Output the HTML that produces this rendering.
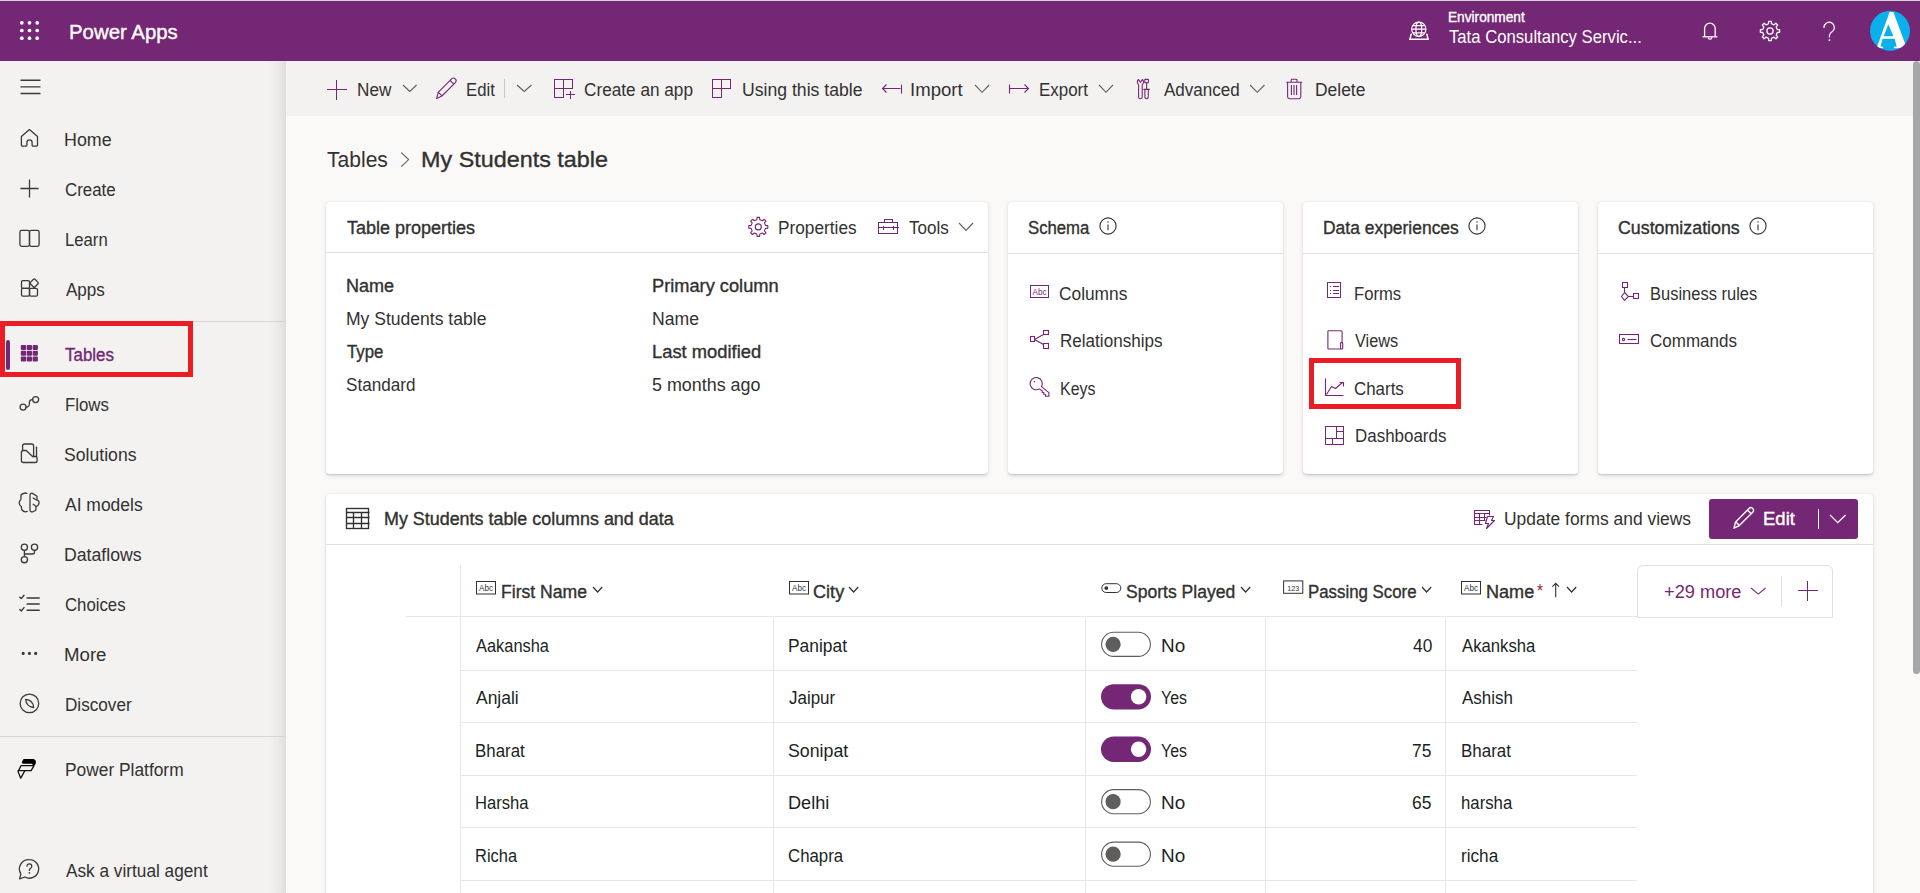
<!DOCTYPE html>
<html><head><meta charset="utf-8"><title>Power Apps | Tables</title>
<style>
html,body{margin:0;padding:0;width:1920px;height:893px;overflow:hidden;background:#faf9f8}
body{position:relative;font-family:"Liberation Sans",sans-serif}
.t{position:absolute;white-space:nowrap;line-height:1;transform-origin:0 0}
svg{display:block;overflow:visible}
</style></head><body>
<div style="position:absolute;left:0px;top:0px;width:1920px;height:1px;background:#d4d4d4"></div>
<div style="position:absolute;left:0px;top:1px;width:1920px;height:60px;background:#742774"></div>
<svg style="position:absolute;left:18px;top:19px" width="24" height="24" viewBox="18 19 24 24" fill="none"><g ><circle cx="21.80" cy="22.80" r="1.85" fill="#fff"/><circle cx="21.80" cy="30.50" r="1.85" fill="#fff"/><circle cx="21.80" cy="38.20" r="1.85" fill="#fff"/><circle cx="29.50" cy="22.80" r="1.85" fill="#fff"/><circle cx="29.50" cy="30.50" r="1.85" fill="#fff"/><circle cx="29.50" cy="38.20" r="1.85" fill="#fff"/><circle cx="37.20" cy="22.80" r="1.85" fill="#fff"/><circle cx="37.20" cy="30.50" r="1.85" fill="#fff"/><circle cx="37.20" cy="38.20" r="1.85" fill="#fff"/></g></svg>
<div class="t" style="left:69.48px;top:22.20px;font-size:20px;font-weight:400;-webkit-text-stroke:0.36px #fff;color:#fff;transform:scaleX(1.0190);">Power Apps</div>
<svg style="position:absolute;left:1404px;top:16px" width="30" height="30" viewBox="1404 16 30 30" fill="none"><g stroke="#fff" stroke-width="1.2"><circle cx="1418.8" cy="29.2" r="7.1"/><ellipse cx="1418.8" cy="29.2" rx="2.9" ry="7.1"/><path d="M1411.7 29.2 H1425.9 M1412.8 25.6 H1424.8 M1412.8 32.8 H1424.8"/><path d="M1411.3 33.6 L1409.9 39.2 H1428.1 L1426.7 33.6" stroke-width="1.5"/></g></svg>
<div class="t" style="left:1448.41px;top:10.90px;font-size:13.8px;font-weight:400;-webkit-text-stroke:0.36px #fff;color:#fff;transform:scaleX(0.9909);">Environment</div>
<div class="t" style="left:1449.40px;top:29.00px;font-size:17.5px;font-weight:400;color:#fff;transform:scaleX(0.9532);">Tata Consultancy Servic...</div>
<svg style="position:absolute;left:1698px;top:18px" width="24" height="26" viewBox="1698 18 24 26" fill="none"><g stroke="#fff" stroke-width="1.3" stroke-linejoin="round"><path d="M1704.6 36.6 V28.5 a5.3 5.3 0 0 1 10.6 0 V36.6"/><path d="M1702.5 36.8 H1717.4"/><path d="M1708.2 37.4 a1.8 1.8 0 0 0 3.6 0"/></g></svg>
<svg style="position:absolute;left:1757px;top:18px" width="26" height="26" viewBox="1757 18 26 26" fill="none"><g stroke="#fff" stroke-width="1.3" stroke-linejoin="round"><polygon points="1768.49,23.76 1768.72,21.38 1771.28,21.38 1771.51,23.76 1774.05,24.81 1775.90,23.30 1777.70,25.10 1776.19,26.95 1777.24,29.49 1779.62,29.72 1779.62,32.28 1777.24,32.51 1776.19,35.05 1777.70,36.90 1775.90,38.70 1774.05,37.19 1771.51,38.24 1771.28,40.62 1768.72,40.62 1768.49,38.24 1765.95,37.19 1764.10,38.70 1762.30,36.90 1763.81,35.05 1762.76,32.51 1760.38,32.28 1760.38,29.72 1762.76,29.49 1763.81,26.95 1762.30,25.10 1764.10,23.30 1765.95,24.81"/><circle cx="1770" cy="31" r="3.1"/></g></svg>
<svg style="position:absolute;left:1818px;top:18px" width="22" height="26" viewBox="1818 18 22 26" fill="none"><g stroke="#fff" stroke-width="1.3"><path d="M1824 27.4 a5.2 5.2 0 1 1 8.0 4.4 c-1.8 1.1 -2.6 2.2 -2.6 4.1 v1.0" stroke-linecap="round"/><circle cx="1829.4" cy="40.1" r="0.95" fill="#fff" stroke="none"/></g></svg>
<svg style="position:absolute;left:1866px;top:7px" width="48" height="48" viewBox="1866 7 48 48"><defs><clipPath id="av"><circle cx="1890" cy="30.8" r="20"/></clipPath></defs><circle cx="1890" cy="30.8" r="20" fill="#0aafec"/><g clip-path="url(#av)" fill="#fff"><path fill-rule="evenodd" d="M1889.6 12 H1893.4 L1906.5 47.5 H1897 L1894.6 38.8 H1882.6 L1880.2 47.5 H1876.8 Z M1888.3 24.2 L1893.4 36.3 H1883.6 Z"/><rect x="1874" y="46.6" width="9" height="1.6"/><rect x="1894" y="46.6" width="14" height="1.6"/></g></svg>
<div style="position:absolute;left:0px;top:61px;width:286px;height:832px;background:#f3f2f1"></div>
<div style="position:absolute;left:268px;top:61px;width:18px;height:832px;background:linear-gradient(to right, rgba(0,0,0,0) 0%, rgba(0,0,0,0.03) 55%, rgba(0,0,0,0.085) 100%)"></div>
<svg style="position:absolute;left:18px;top:76px" width="26" height="22" viewBox="18 76 26 22" fill="none"><g stroke="#3b3a39" stroke-width="1.4"><path d="M20.5 80.3 H40.5 M20.5 86.9 H40.5 M20.5 93.5 H40.5"/></g></svg>
<svg style="position:absolute;left:15px;top:125.5px" width="30" height="30" viewBox="15 125.5 30 30" fill="none"><g stroke="#3b3a39" stroke-width="1.3" stroke-linejoin="round" stroke-linecap="round"><path d="M21.40 136.10 L29.45 129.10 L37.50 136.10 V144.40 a1.2 1.2 0 0 1 -1.2 1.2 H33.30 a1.2 1.2 0 0 1 -1.2 -1.2 V141.90 a2.6 2.6 0 0 0 -5.2 0 V144.40 a1.2 1.2 0 0 1 -1.2 1.2 H22.60 a1.2 1.2 0 0 1 -1.2 -1.2 Z"/></g></svg>
<div class="t" style="left:64.48px;top:131.90px;font-size:17.5px;font-weight:400;color:#323130;transform:scaleX(1.0200);">Home</div>
<svg style="position:absolute;left:15px;top:175.5px" width="30" height="30" viewBox="15 175.5 30 30" fill="none"><g stroke="#3b3a39" stroke-width="1.3" stroke-linejoin="round" ><path d="M29.50 178.90 V197.10 M20.40 188.00 H38.60"/></g></svg>
<div class="t" style="left:64.54px;top:181.90px;font-size:17.5px;font-weight:400;color:#323130;transform:scaleX(0.9647);">Create</div>
<svg style="position:absolute;left:15px;top:225px" width="30" height="30" viewBox="15 225 30 30" fill="none"><g stroke="#3b3a39" stroke-width="1.3" stroke-linejoin="round" stroke-linecap="round"><rect x="19.90" y="230.30" width="9.6" height="16.1" rx="1.8"/><rect x="29.50" y="230.30" width="9.6" height="16.1" rx="1.8"/></g></svg>
<div class="t" style="left:64.55px;top:231.90px;font-size:17.5px;font-weight:400;color:#323130;transform:scaleX(0.9535);">Learn</div>
<svg style="position:absolute;left:15px;top:275.2px" width="30" height="30" viewBox="15 275.2 30 30" fill="none"><g stroke="#3b3a39" stroke-width="1.3" stroke-linejoin="round" stroke-linecap="round"><rect x="21.50" y="280.80" width="8" height="7.8" rx="1.4"/><rect x="21.50" y="288.60" width="8" height="7.8" rx="1.4"/><rect x="29.50" y="288.60" width="8" height="7.8" rx="1.4"/><rect x="31.00" y="280.10" width="6.4" height="6.4" rx="1" transform="rotate(45 34.20 283.30)"/></g></svg>
<div class="t" style="left:65.50px;top:281.90px;font-size:17.5px;font-weight:400;color:#323130;transform:scaleX(0.9744);">Apps</div>
<svg style="position:absolute;left:18px;top:342px" width="24" height="24" viewBox="18 342 24 24" fill="none"><g ><rect x="20.80" y="344.90" width="5.3" height="5.2" rx="1.0" fill="#742774"/><rect x="20.80" y="350.65" width="5.3" height="5.2" rx="1.0" fill="#742774"/><rect x="20.80" y="356.40" width="5.3" height="5.2" rx="1.0" fill="#742774"/><rect x="26.70" y="344.90" width="5.3" height="5.2" rx="1.0" fill="#742774"/><rect x="26.70" y="350.65" width="5.3" height="5.2" rx="1.0" fill="#742774"/><rect x="26.70" y="356.40" width="5.3" height="5.2" rx="1.0" fill="#742774"/><rect x="32.60" y="344.90" width="5.3" height="5.2" rx="1.0" fill="#742774"/><rect x="32.60" y="350.65" width="5.3" height="5.2" rx="1.0" fill="#742774"/><rect x="32.60" y="356.40" width="5.3" height="5.2" rx="1.0" fill="#742774"/></g></svg>
<div class="t" style="left:65.10px;top:346.90px;font-size:17.5px;font-weight:400;-webkit-text-stroke:0.36px #742774;color:#742774;transform:scaleX(0.9680);">Tables</div>
<div style="position:absolute;left:6px;top:340px;width:4px;height:30px;background:#742774;border-radius:2px"></div>
<svg style="position:absolute;left:15px;top:390px" width="30" height="30" viewBox="15 390 30 30" fill="none"><g stroke="#3b3a39" stroke-width="1.3" stroke-linejoin="round" stroke-linecap="round"><circle cx="23.06" cy="407.10" r="3.0"/><circle cx="35.66" cy="399.60" r="3.0"/><path d="M26.00 407.30 C28.80 406.80 29.40 406.20 29.40 403.50 V402.30 C29.40 400.60 30.50 399.60 32.60 399.60"/></g></svg>
<div class="t" style="left:64.54px;top:396.90px;font-size:17.5px;font-weight:400;color:#323130;transform:scaleX(0.9614);">Flows</div>
<svg style="position:absolute;left:15px;top:440px" width="30" height="30" viewBox="15 440 30 30" fill="none"><g stroke="#3b3a39" stroke-width="1.3" stroke-linejoin="round" stroke-linecap="round"><path d="M22.60 450.50 V446.00 a2 2 0 0 1 2 -2 H31.60 a2 2 0 0 1 2 2 V456.50"/><path d="M36.50 447.20 V456.50"/><path d="M21.40 452.50 a2 2 0 0 1 2 -2 H26.20 L32.50 456.50 H35.30 a1.8 1.8 0 0 1 1.8 1.8 V460.50 a2 2 0 0 1 -2 2 H23.40 a2 2 0 0 1 -2 -2 Z"/></g></svg>
<div class="t" style="left:64.49px;top:446.90px;font-size:17.5px;font-weight:400;color:#323130;transform:scaleX(1.0071);">Solutions</div>
<svg style="position:absolute;left:15px;top:490px" width="30" height="30" viewBox="15 490 30 30" fill="none"><g stroke="#3b3a39" stroke-width="1.3" stroke-linejoin="round" stroke-linecap="round"><path d="M26.80 493.40 C25.50 492.60 23.60 493.00 21.20 494.60 L20.80 499.80 C19.60 500.60 19.20 501.60 19.20 503.00 C19.20 504.60 20.00 505.60 21.40 506.80 L21.60 509.50 C23.20 511.50 25.30 512.30 27.20 511.40"/><path d="M32.50 493.40 C31.20 492.60 30.00 493.80 30.00 495.50 V510.00 C30.00 511.60 31.40 512.20 32.90 511.80 L35.80 510.20 L36.00 506.80 C38.60 505.60 39.20 503.50 39.00 501.80 C38.90 500.80 38.20 500.20 37.00 499.80 V496.20 L32.50 493.40 M33.20 498.00 L37.00 500.20 M33.20 504.30 L36.30 506.60"/></g></svg>
<div class="t" style="left:64.90px;top:496.90px;font-size:17.5px;font-weight:400;color:#323130;transform:scaleX(0.9974);">AI models</div>
<svg style="position:absolute;left:15px;top:540px" width="30" height="30" viewBox="15 540 30 30" fill="none"><g stroke="#3b3a39" stroke-width="1.3" stroke-linejoin="round" stroke-linecap="round"><circle cx="24.40" cy="547.20" r="3.1"/><circle cx="34.50" cy="547.20" r="3.1"/><circle cx="24.40" cy="559.65" r="3.1"/><path d="M24.40 550.30 V556.50 M34.50 550.30 V552.00 a2 2 0 0 1 -2 2 H24.40"/></g></svg>
<div class="t" style="left:64.49px;top:546.90px;font-size:17.5px;font-weight:400;color:#323130;transform:scaleX(1.0093);">Dataflows</div>
<svg style="position:absolute;left:15px;top:590px" width="30" height="30" viewBox="15 590 30 30" fill="none"><g stroke="#3b3a39" stroke-width="1.3" stroke-linejoin="round" stroke-linecap="round"><path d="M19.80 597.20 L21.30 598.60 L24.00 595.20 M19.80 609.60 L21.30 611.00 L24.00 607.60" stroke-width="1.4"/><path d="M27.10 597.90 H39.20 M27.10 604.10 H39.20 M27.10 610.30 H39.20" stroke-width="1.5"/></g></svg>
<div class="t" style="left:64.54px;top:596.90px;font-size:17.5px;font-weight:400;color:#323130;transform:scaleX(0.9581);">Choices</div>
<svg style="position:absolute;left:15px;top:640px" width="30" height="30" viewBox="15 640 30 30" fill="none"><g stroke="#3b3a39" stroke-width="1.3" stroke-linejoin="round" stroke-linecap="round"><circle cx="23.20" cy="653.40" r="1.55" fill="#3b3a39" stroke="none"/><circle cx="29.40" cy="653.40" r="1.55" fill="#3b3a39" stroke="none"/><circle cx="35.66" cy="653.40" r="1.55" fill="#3b3a39" stroke="none"/></g></svg>
<div class="t" style="left:64.43px;top:646.90px;font-size:17.5px;font-weight:400;color:#323130;transform:scaleX(1.0658);">More</div>
<svg style="position:absolute;left:15px;top:690px" width="30" height="30" viewBox="15 690 30 30" fill="none"><g stroke="#3b3a39" stroke-width="1.3" stroke-linejoin="round" stroke-linecap="round"><circle cx="29.44" cy="703.40" r="9.3"/><path d="M25.60 699.30 C30.50 699.80 33.30 702.60 33.70 707.50 C28.80 707.00 26.00 704.20 25.60 699.30 Z"/></g></svg>
<div class="t" style="left:64.52px;top:696.90px;font-size:17.5px;font-weight:400;color:#323130;transform:scaleX(0.9791);">Discover</div>
<svg style="position:absolute;left:12px;top:755px" width="30" height="30" viewBox="12 755 30 30" fill="none"><g stroke="#3b3a39" stroke-width="1.3" stroke-linejoin="round" stroke-linecap="round"><path d="M23.59 759.10 L32.99 759.10 C35.68 759.20 36.69 761.89 35.18 764.74 L33.50 766.08 L31.82 763.73 L23.08 763.73 C21.74 763.73 21.57 762.22 22.41 761.05 Z" fill="#000" stroke="none"/><path d="M21.07 765.58 H34.00 L31.15 770.62 H18.55 Z" stroke="#111" stroke-width="1.3"/><path d="M17.88 771.12 L20.73 778.18 L24.60 771.12" stroke="#111" stroke-width="1.3"/></g></svg>
<div class="t" style="left:64.51px;top:761.90px;font-size:17.5px;font-weight:400;color:#323130;transform:scaleX(0.9915);">Power Platform</div>
<svg style="position:absolute;left:15px;top:856px" width="30" height="30" viewBox="15 856 30 30" fill="none"><g stroke="#3b3a39" stroke-width="1.3" stroke-linejoin="round" stroke-linecap="round"><path d="M29.40 859.60 a9.3 9.3 0 1 1 -4.6 17.4 L19.60 878.80 L20.90 873.90 A9.3 9.3 0 0 1 29.40 859.60 Z"/><path d="M27.00 866.20 a2.4 2.4 0 1 1 3.6 2.1 c-0.8 0.45 -1.2 0.9 -1.2 1.7 v0.4"/><circle cx="29.40" cy="872.90" r="0.85" fill="#3b3a39" stroke="none"/></g></svg>
<div class="t" style="left:65.50px;top:863.00px;font-size:17.5px;font-weight:400;color:#323130;transform:scaleX(0.9840);">Ask a virtual agent</div>
<div style="position:absolute;left:0px;top:321px;width:286px;height:1px;background:#d8d6d4"></div>
<div style="position:absolute;left:0px;top:736px;width:286px;height:1px;background:#d8d6d4"></div>
<div style="position:absolute;left:0px;top:321px;width:193px;height:56px;box-sizing:border-box;border:5px solid #ec1c24"></div>
<div style="position:absolute;left:286px;top:61px;width:1627px;height:55px;background:#f3f2f1"></div>
<div style="position:absolute;left:286px;top:116px;width:1627px;height:777px;background:#faf9f8"></div>
<svg style="position:absolute;left:322px;top:75px" width="28" height="28" viewBox="322 75 28 28" fill="none"><g stroke="#742774" stroke-width="1.1" shape-rendering="crispEdges"><path d="M336.5 79.5 V99.5 M326.5 89.5 H346.5"/></g></svg>
<div class="t" style="left:356.52px;top:82.00px;font-size:17.5px;font-weight:400;color:#323130;transform:scaleX(0.9794);">New</div>
<svg style="position:absolute;left:400.7px;top:83.3px" width="17.600000000000023" height="10.5" viewBox="400.7 83.3 17.600000000000023 10.5" fill="none"><g stroke="#605e5c" stroke-width="1.1"><path d="M402.7 85.3 L409.50 91.8 L416.3 85.3"/></g></svg>
<svg style="position:absolute;left:432px;top:75px" width="28" height="28" viewBox="432 75 28 28" fill="none"><g stroke="#742774" stroke-width="1.1"><path d="M436.6 98.6 L438.2 92.3 L451.6 78.9 a2.6 2.6 0 0 1 3.7 3.7 L441.9 96.0 Z M438.5 92.3 L442.2 96.2 M450.3 80.6 L453.8 84.2" stroke-linejoin="round"/></g></svg>
<div class="t" style="left:466.34px;top:82.00px;font-size:17.5px;font-weight:400;color:#323130;transform:scaleX(0.9552);">Edit</div>
<div style="position:absolute;left:504px;top:79px;width:1px;height:19px;background:#c8c6c4"></div>
<svg style="position:absolute;left:514.5px;top:83.3px" width="18.5" height="10.5" viewBox="514.5 83.3 18.5 10.5" fill="none"><g stroke="#605e5c" stroke-width="1.1"><path d="M516.5 85.3 L523.75 91.8 L531 85.3"/></g></svg>
<svg style="position:absolute;left:550px;top:75px" width="28" height="28" viewBox="550 75 28 28" fill="none"><g stroke="#742774" stroke-width="1.1" shape-rendering="crispEdges"><path d="M554.5 79.5 H572.5 V88.5 H563.5 V97.5 H554.5 Z M563.5 79.5 V88.5 M554.5 88.5 H563.5 M570.5 90.5 V98.5 M565.5 94.5 H574.5"/></g></svg>
<div class="t" style="left:583.62px;top:82.00px;font-size:17.5px;font-weight:400;color:#323130;transform:scaleX(0.9826);">Create an app</div>
<svg style="position:absolute;left:708px;top:75px" width="28" height="28" viewBox="708 75 28 28" fill="none"><g stroke="#742774" stroke-width="1.1" shape-rendering="crispEdges"><path d="M712.5 79.5 H730.5 V88.5 H721.5 V97.5 H712.5 Z M721.5 79.5 V88.5 M712.5 88.5 H721.5"/></g></svg>
<div class="t" style="left:741.69px;top:82.00px;font-size:17.5px;font-weight:400;color:#323130;transform:scaleX(1.0068);">Using this table</div>
<svg style="position:absolute;left:878px;top:80px" width="28" height="16" viewBox="878 80 28 16" fill="none"><g stroke="#742774" stroke-width="1.1"><path d="M882.5 88.5 H900.5 M886.5 84.5 L882.5 88.5 L886.5 92.5 M901.5 84.5 V93.5"/></g></svg>
<div class="t" style="left:910.38px;top:82.00px;font-size:17.5px;font-weight:400;color:#323130;transform:scaleX(1.0625);">Import</div>
<svg style="position:absolute;left:972.5px;top:82.5px" width="18.200000000000045" height="11.299999999999997" viewBox="972.5 82.5 18.200000000000045 11.299999999999997" fill="none"><g stroke="#605e5c" stroke-width="1.1"><path d="M974.5 84.5 L981.60 91.8 L988.7 84.5"/></g></svg>
<svg style="position:absolute;left:1005px;top:80px" width="28" height="16" viewBox="1005 80 28 16" fill="none"><g stroke="#742774" stroke-width="1.1"><path d="M1009.5 88.5 H1028.5 M1024.5 84.5 L1028.5 88.5 L1024.5 92.5 M1009.5 84.5 V93.5"/></g></svg>
<div class="t" style="left:1038.63px;top:82.00px;font-size:17.5px;font-weight:400;color:#323130;transform:scaleX(0.9680);">Export</div>
<svg style="position:absolute;left:1097px;top:82.5px" width="18" height="11.299999999999997" viewBox="1097 82.5 18 11.299999999999997" fill="none"><g stroke="#605e5c" stroke-width="1.1"><path d="M1099 84.5 L1106.00 91.8 L1113 84.5"/></g></svg>
<svg style="position:absolute;left:1133px;top:75px" width="22" height="28" viewBox="1133 75 22 28" fill="none"><g stroke="#742774" stroke-width="1.1"><path d="M1138.6 84.6 V97 a1.8 1.8 0 0 0 3.6 0 V84.6 M1138.6 84.6 C1136.8 83.6 1136.9 80.4 1138.6 79.6 L1140.4 82.2 L1142.2 79.6 C1143.9 80.4 1144 83.6 1142.2 84.6"/><rect x="1144.8" y="79.4" width="3.6" height="3.4" rx="0.3"/><path d="M1146.6 82.8 V89.4 M1143.4 89.4 H1149.8"/><path d="M1144.9 89.4 V97 a1.7 1.7 0 0 0 3.4 0 V89.4"/></g></svg>
<div class="t" style="left:1164.00px;top:82.00px;font-size:17.5px;font-weight:400;color:#323130;transform:scaleX(0.9740);">Advanced</div>
<svg style="position:absolute;left:1248px;top:82.5px" width="18.5" height="11.299999999999997" viewBox="1248 82.5 18.5 11.299999999999997" fill="none"><g stroke="#605e5c" stroke-width="1.1"><path d="M1250 84.5 L1257.25 91.8 L1264.5 84.5"/></g></svg>
<svg style="position:absolute;left:1282px;top:75px" width="24" height="28" viewBox="1282 75 24 28" fill="none"><g stroke="#742774" stroke-width="1.1"><path d="M1286.2 82.2 H1302.2 M1291.2 82.2 V80 a0.8 0.8 0 0 1 0.8 -0.8 H1296.2 a0.8 0.8 0 0 1 0.8 0.8 V82.2 M1287.6 82.2 V96.8 a1.9 1.9 0 0 0 1.9 1.9 H1298.9 a1.9 1.9 0 0 0 1.9 -1.9 V82.2 M1291.4 85 V94.9 M1294 85 V94.9 M1296.6 85 V94.9"/></g></svg>
<div class="t" style="left:1314.60px;top:82.00px;font-size:17.5px;font-weight:400;color:#323130;transform:scaleX(0.9959);">Delete</div>
<div class="t" style="left:327.00px;top:148.60px;font-size:22.5px;font-weight:400;color:#323130;transform:scaleX(0.9359);">Tables</div>
<svg style="position:absolute;left:398px;top:150px" width="14" height="20" viewBox="398 150 14 20" fill="none"><g stroke="#605e5c" stroke-width="1.1"><path d="M401.3 152.6 L408.6 159.6 L401.3 166.6"/></g></svg>
<div class="t" style="left:421.32px;top:148.60px;font-size:22.5px;font-weight:400;-webkit-text-stroke:0.36px #323130;color:#323130;transform:scaleX(1.0384);">My Students table</div>
<div style="position:absolute;left:326px;top:202px;width:662px;height:272px;background:#fff;border-radius:4px;box-shadow:0 1.6px 4px rgba(0,0,0,0.12),0 0.3px 1.1px rgba(0,0,0,0.11)"></div>
<div style="position:absolute;left:326px;top:252px;width:662px;height:1px;background:#e1dfdd"></div>
<div style="position:absolute;left:1008px;top:202px;width:275px;height:272px;background:#fff;border-radius:4px;box-shadow:0 1.6px 4px rgba(0,0,0,0.12),0 0.3px 1.1px rgba(0,0,0,0.11)"></div>
<div style="position:absolute;left:1008px;top:253px;width:275px;height:1px;background:#e1dfdd"></div>
<div style="position:absolute;left:1303px;top:202px;width:275px;height:272px;background:#fff;border-radius:4px;box-shadow:0 1.6px 4px rgba(0,0,0,0.12),0 0.3px 1.1px rgba(0,0,0,0.11)"></div>
<div style="position:absolute;left:1303px;top:253px;width:275px;height:1px;background:#e1dfdd"></div>
<div style="position:absolute;left:1598px;top:202px;width:275px;height:272px;background:#fff;border-radius:4px;box-shadow:0 1.6px 4px rgba(0,0,0,0.12),0 0.3px 1.1px rgba(0,0,0,0.11)"></div>
<div style="position:absolute;left:1598px;top:253px;width:275px;height:1px;background:#e1dfdd"></div>
<div style="position:absolute;left:326px;top:494px;width:1547px;height:420px;background:#fff;border-radius:4px;box-shadow:0 1.6px 4px rgba(0,0,0,0.12),0 0.3px 1.1px rgba(0,0,0,0.11)"></div>
<div style="position:absolute;left:326px;top:544px;width:1547px;height:1px;background:#e1dfdd"></div>
<div class="t" style="left:346.80px;top:219.90px;font-size:17.5px;font-weight:400;-webkit-text-stroke:0.36px #323130;color:#323130;transform:scaleX(1.0290);">Table properties</div>
<svg style="position:absolute;left:745px;top:214px" width="26" height="26" viewBox="745 214 26 26" fill="none"><g stroke="#742774" stroke-width="1.1" stroke-linejoin="round"><polygon points="756.81,219.75 757.04,217.38 759.56,217.38 759.79,219.75 762.30,220.79 764.14,219.28 765.92,221.06 764.41,222.90 765.45,225.41 767.82,225.64 767.82,228.16 765.45,228.39 764.41,230.90 765.92,232.74 764.14,234.52 762.30,233.01 759.79,234.05 759.56,236.42 757.04,236.42 756.81,234.05 754.30,233.01 752.46,234.52 750.68,232.74 752.19,230.90 751.15,228.39 748.78,228.16 748.78,225.64 751.15,225.41 752.19,222.90 750.68,221.06 752.46,219.28 754.30,220.79"/><circle cx="758.3" cy="226.9" r="3.0"/></g></svg>
<div class="t" style="left:778.41px;top:219.80px;font-size:17.5px;font-weight:400;color:#323130;transform:scaleX(0.9859);">Properties</div>
<svg style="position:absolute;left:875px;top:214px" width="28" height="24" viewBox="875 214 28 24" fill="none"><g stroke="#742774" stroke-width="1.1" shape-rendering="crispEdges"><rect x="878.5" y="222.5" width="19" height="11"/><path d="M884.5 222.5 V219.5 H892.5 V222.5 M878.5 227.5 H898.5 M883.5 225.5 V229.5 M893.5 225.5 V229.5"/></g></svg>
<div class="t" style="left:909.00px;top:219.80px;font-size:17.5px;font-weight:400;color:#323130;transform:scaleX(0.9750);">Tools</div>
<svg style="position:absolute;left:957px;top:220.6px" width="18" height="11.400000000000006" viewBox="957 220.6 18 11.400000000000006" fill="none"><g stroke="#605e5c" stroke-width="1.1"><path d="M959 222.6 L966.00 230 L973 222.6"/></g></svg>
<div class="t" style="left:346.27px;top:278.10px;font-size:17.5px;font-weight:400;-webkit-text-stroke:0.36px #323130;color:#323130;transform:scaleX(1.0289);">Name</div>
<div class="t" style="left:346.30px;top:311.00px;font-size:17.5px;font-weight:400;color:#323130;transform:scaleX(1.0022);">My Students table</div>
<div class="t" style="left:651.96px;top:278.10px;font-size:17.5px;font-weight:400;-webkit-text-stroke:0.36px #323130;color:#323130;transform:scaleX(1.0417);">Primary column</div>
<div class="t" style="left:651.99px;top:311.00px;font-size:17.5px;font-weight:400;color:#323130;transform:scaleX(1.0067);">Name</div>
<div class="t" style="left:347.30px;top:343.70px;font-size:17.5px;font-weight:400;-webkit-text-stroke:0.36px #323130;color:#323130;transform:scaleX(0.9579);">Type</div>
<div class="t" style="left:346.32px;top:376.90px;font-size:17.5px;font-weight:400;color:#323130;transform:scaleX(0.9783);">Standard</div>
<div class="t" style="left:651.95px;top:343.70px;font-size:17.5px;font-weight:400;-webkit-text-stroke:0.36px #323130;color:#323130;transform:scaleX(1.0490);">Last modified</div>
<div class="t" style="left:651.98px;top:376.90px;font-size:17.5px;font-weight:400;color:#323130;transform:scaleX(1.0221);">5 months ago</div>
<div class="t" style="left:1027.65px;top:219.80px;font-size:17.5px;font-weight:400;-webkit-text-stroke:0.36px #323130;color:#323130;transform:scaleX(0.9547);">Schema</div>
<svg style="position:absolute;left:1097.3px;top:215.4px" width="22" height="22" viewBox="1097.3 215.4 22 22" fill="none"><g stroke="#323130" stroke-width="1.1"><circle cx="1108.3" cy="226.4" r="8.1"/><path d="M1108.3 224.8 V230.6"/><circle cx="1108.3" cy="222.4" r="0.75" fill="#323130" stroke="none"/></g></svg>
<div class="t" style="left:1322.90px;top:220.00px;font-size:17.5px;font-weight:400;-webkit-text-stroke:0.36px #323130;color:#323130;transform:scaleX(0.9970);">Data experiences</div>
<svg style="position:absolute;left:1466.2px;top:215.4px" width="22" height="22" viewBox="1466.2 215.4 22 22" fill="none"><g stroke="#323130" stroke-width="1.1"><circle cx="1477.2" cy="226.4" r="8.1"/><path d="M1477.2 224.8 V230.6"/><circle cx="1477.2" cy="222.4" r="0.75" fill="#323130" stroke="none"/></g></svg>
<div class="t" style="left:1617.88px;top:219.60px;font-size:17.5px;font-weight:400;-webkit-text-stroke:0.36px #323130;color:#323130;transform:scaleX(1.0178);">Customizations</div>
<svg style="position:absolute;left:1747.3px;top:215.4px" width="22" height="22" viewBox="1747.3 215.4 22 22" fill="none"><g stroke="#323130" stroke-width="1.1"><circle cx="1758.3" cy="226.4" r="8.1"/><path d="M1758.3 224.8 V230.6"/><circle cx="1758.3" cy="222.4" r="0.75" fill="#323130" stroke="none"/></g></svg>
<svg style="position:absolute;left:1026px;top:280px" width="28" height="22" viewBox="1026 280 28 22" fill="none"><g stroke="#742774" stroke-width="1.1" shape-rendering="crispEdges"><rect x="1030.5" y="285.5" width="18" height="12"/><text x="1039.5" y="294.5" text-anchor="middle" font-family="Liberation Sans" font-size="8.6" fill="#742774" stroke="none" textLength="14" lengthAdjust="spacingAndGlyphs">Abc</text></g></svg>
<div class="t" style="left:1059.01px;top:285.70px;font-size:17.5px;font-weight:400;color:#323130;transform:scaleX(0.9896);">Columns</div>
<svg style="position:absolute;left:1026px;top:326px" width="28" height="26" viewBox="1026 326 28 26" fill="none"><g stroke="#742774" stroke-width="1.1"><rect x="1030.5" y="336.5" width="4" height="5"/><rect x="1043.5" y="330.5" width="5" height="4"/><rect x="1043.5" y="343.5" width="5" height="5"/><path d="M1034.5 339.5 L1043.5 334.5 M1034.5 339.5 L1043.5 344.5"/></g></svg>
<div class="t" style="left:1059.52px;top:333.10px;font-size:17.5px;font-weight:400;color:#323130;transform:scaleX(0.9757);">Relationships</div>
<svg style="position:absolute;left:1026px;top:373px" width="28" height="28" viewBox="1026 373 28 28" fill="none"><g stroke="#742774" stroke-width="1.1" stroke-linejoin="round"><path d="M1039.25 388.88 A6.1 6.1 0 1 1 1041.48 386.65 L1048.9 392.6 V396.2 H1045.4 V394.3 H1043.8 V392.5 H1042.2 V390.7 Z"/><circle cx="1034.4" cy="381.7" r="0.8" fill="#742774" stroke="none"/></g></svg>
<div class="t" style="left:1059.59px;top:380.60px;font-size:17.5px;font-weight:400;color:#323130;transform:scaleX(0.9108);">Keys</div>
<svg style="position:absolute;left:1323px;top:279px" width="24" height="24" viewBox="1323 279 24 24" fill="none"><g stroke="#742774" stroke-width="1.1" shape-rendering="crispEdges"><rect x="1327.5" y="282.5" width="13" height="15"/><path d="M1332.5 286.5 H1338.5 M1332.5 290.5 H1338.5 M1332.5 293.5 H1338.5 M1329.5 286.5 H1330.5 M1329.5 290.5 H1330.5 M1329.5 293.5 H1330.5"/></g></svg>
<div class="t" style="left:1354.45px;top:285.70px;font-size:17.5px;font-weight:400;color:#323130;transform:scaleX(0.9500);">Forms</div>
<svg style="position:absolute;left:1323px;top:327px" width="24" height="26" viewBox="1323 327 24 26" fill="none"><g stroke="#742774" stroke-width="1.1"><path d="M1342.1 342.6 V331.8 a1 1 0 0 0 -1 -1 H1328.5 a0.6 0.6 0 0 0 -0.6 0.6 V348.4 a0.6 0.6 0 0 0 0.6 0.6 H1341.9 a0.8 0.8 0 0 0 0.8 -0.8 V343.4 a0.8 0.8 0 0 0 -0.8 -0.8 H1341.2 a0.6 0.6 0 0 0 -0.6 0.6 V349"/></g></svg>
<div class="t" style="left:1355.40px;top:333.10px;font-size:17.5px;font-weight:400;color:#323130;transform:scaleX(0.9326);">Views</div>
<svg style="position:absolute;left:1322px;top:375px" width="24" height="24" viewBox="1322 375 24 24" fill="none"><g stroke="#742774" stroke-width="1.1"><path d="M1325.5 378.5 V395.5 H1343.5 M1326.5 394.5 L1331.5 386.5 L1335.5 388.5 L1342.5 382.5 M1339.5 382.5 H1343.5 V386.5"/></g></svg>
<div class="t" style="left:1353.93px;top:380.60px;font-size:17.5px;font-weight:400;color:#323130;transform:scaleX(0.9660);">Charts</div>
<svg style="position:absolute;left:1321px;top:422px" width="26" height="26" viewBox="1321 422 26 26" fill="none"><g stroke="#742774" stroke-width="1.1" shape-rendering="crispEdges"><rect x="1325.5" y="426.5" width="18" height="18"/><path d="M1336.5 426.5 V438.5 M1325.5 438.5 H1343.5 M1336.5 431.5 H1343.5 M1332.5 438.5 V444.5"/></g></svg>
<div class="t" style="left:1354.53px;top:427.90px;font-size:17.5px;font-weight:400;color:#323130;transform:scaleX(0.9688);">Dashboards</div>
<div style="position:absolute;left:1309px;top:358px;width:152px;height:51px;box-sizing:border-box;border:5px solid #ec1c24"></div>
<svg style="position:absolute;left:1616px;top:279px" width="26" height="24" viewBox="1616 279 26 24" fill="none"><g stroke="#742774" stroke-width="1.1"><rect x="1622.5" y="282.5" width="5" height="5"/><path d="M1624.5 287.5 V292.5"/><path d="M1624.5 292.5 L1628.5 296.5 L1624.5 300.5 L1621.5 296.5 Z"/><path d="M1628.5 296.5 H1633.5"/><rect x="1633.5" y="293.5" width="5" height="5"/></g></svg>
<div class="t" style="left:1649.56px;top:285.70px;font-size:17.5px;font-weight:400;color:#323130;transform:scaleX(0.9420);">Business rules</div>
<svg style="position:absolute;left:1616px;top:330px" width="26" height="18" viewBox="1616 330 26 18" fill="none"><g stroke="#742774" stroke-width="1.1"><rect x="1619.5" y="334.5" width="19" height="9"/><circle cx="1623.5" cy="339.5" r="1.15"/><path d="M1627.5 339.5 H1636.5"/></g></svg>
<div class="t" style="left:1649.53px;top:333.10px;font-size:17.5px;font-weight:400;color:#323130;transform:scaleX(0.9716);">Commands</div>
<svg style="position:absolute;left:342px;top:504px" width="32" height="30" viewBox="342 504 32 30" fill="none"><g stroke="#323130" stroke-width="1.35"><rect x="346.5" y="508.5" width="22" height="20"/><path d="M346.5 512.5 H369.5 M346.5 517.5 H369.5 M346.5 523.5 H369.5 M353.5 512.5 V528.5 M361.5 512.5 V528.5"/></g></svg>
<div class="t" style="left:383.88px;top:510.90px;font-size:17.5px;font-weight:400;-webkit-text-stroke:0.36px #323130;color:#323130;transform:scaleX(1.0230);">My Students table columns and data</div>
<svg style="position:absolute;left:1470px;top:505px" width="30" height="28" viewBox="1470 505 30 28" fill="none"><g stroke="#742774" stroke-width="1.1"><path d="M1489.5 515.5 V510.5 H1474.5 V524.5 H1482.5 M1474.5 513.5 H1489.5 M1474.5 517.5 H1486.5 M1474.5 520.5 H1485.5 M1479.5 513.5 V524.5 M1484.5 513.5 V520.5"/><path d="M1487.5 516.5 H1493.5 L1491.5 520.5 H1494.5 L1486.5 528.5 L1488.5 523.5 H1485.5 Z" stroke-linejoin="round"/></g></svg>
<div class="t" style="left:1503.80px;top:511.40px;font-size:17.5px;font-weight:400;color:#323130;transform:scaleX(0.9962);">Update forms and views</div>
<div style="position:absolute;left:1709px;top:499px;width:149px;height:40px;background:#742774;border-radius:3px"></div>
<svg style="position:absolute;left:1730px;top:505px" width="28" height="28" viewBox="1730 505 28 28" fill="none"><g stroke="#fff" stroke-width="1.4"><path d="M1734 528.2 L1735.6 521.9 L1749 508.5 a2.6 2.6 0 0 1 3.7 3.7 L1739.3 525.6 Z M1735.9 521.9 L1739.6 525.8 M1747.7 510.2 L1751.2 513.8" stroke-linejoin="round"/></g></svg>
<div class="t" style="left:1762.94px;top:511.40px;font-size:17.5px;font-weight:400;-webkit-text-stroke:0.36px #fff;color:#fff;transform:scaleX(1.0586);">Edit</div>
<div style="position:absolute;left:1818px;top:509px;width:1px;height:20px;background:#fff"></div>
<svg style="position:absolute;left:1828px;top:513.2px" width="19.5" height="11.599999999999909" viewBox="1828 513.2 19.5 11.599999999999909" fill="none"><g stroke="#fff" stroke-width="1.3"><path d="M1830 515.2 L1837.75 522.8 L1845.5 515.2"/></g></svg>
<div style="position:absolute;left:460px;top:565px;width:1px;height:330px;background:#e9e7e5"></div>
<div style="position:absolute;left:406px;top:616px;width:1231px;height:1px;background:#e9e7e5"></div>
<svg style="position:absolute;left:474.3px;top:578.6px" width="24" height="18" viewBox="474.3 578.6 24 18" fill="none"><g ><rect x="476.8" y="581.1" width="19" height="12.5" stroke="#323130" stroke-width="1"/><text x="486.3" y="590.6" text-anchor="middle" font-family="Liberation Sans" font-size="8.4" fill="#323130" textLength="14" lengthAdjust="spacingAndGlyphs">Abc</text></g></svg>
<div class="t" style="left:501.49px;top:584.00px;font-size:17.5px;font-weight:400;-webkit-text-stroke:0.36px #323130;color:#323130;transform:scaleX(1.0060);">First Name</div>
<svg style="position:absolute;left:590.8px;top:585.3px" width="14" height="10" viewBox="590.8 585.3 14 10" fill="none"><g stroke="#323130" stroke-width="1.2"><path d="M592.8 587.3 L597.4 592.3 L602.0 587.3"/></g></svg>
<svg style="position:absolute;left:787.3px;top:578.6px" width="24" height="18" viewBox="787.3 578.6 24 18" fill="none"><g ><rect x="789.8" y="581.1" width="19" height="12.5" stroke="#323130" stroke-width="1"/><text x="799.3" y="590.6" text-anchor="middle" font-family="Liberation Sans" font-size="8.4" fill="#323130" textLength="14" lengthAdjust="spacingAndGlyphs">Abc</text></g></svg>
<div class="t" style="left:813.17px;top:584.00px;font-size:17.5px;font-weight:400;-webkit-text-stroke:0.36px #323130;color:#323130;transform:scaleX(1.0345);">City</div>
<svg style="position:absolute;left:847.3px;top:585.3px" width="14" height="10" viewBox="847.3 585.3 14 10" fill="none"><g stroke="#323130" stroke-width="1.2"><path d="M849.3 587.3 L853.9 592.3 L858.5 587.3"/></g></svg>
<svg style="position:absolute;left:1099px;top:580px" width="26" height="16" viewBox="1099 580 26 16" fill="none"><g ><rect x="1101.8" y="583.7" width="19" height="8.8" rx="4.4" stroke="#323130" stroke-width="1"/><circle cx="1106.3" cy="588.1" r="1.9" fill="#323130"/></g></svg>
<div class="t" style="left:1126.10px;top:584.00px;font-size:17.5px;font-weight:400;-webkit-text-stroke:0.36px #323130;color:#323130;transform:scaleX(1.0028);">Sports Played</div>
<svg style="position:absolute;left:1239.2px;top:585.3px" width="14" height="10" viewBox="1239.2 585.3 14 10" fill="none"><g stroke="#323130" stroke-width="1.2"><path d="M1241.2 587.3 L1245.8 592.3 L1250.4 587.3"/></g></svg>
<svg style="position:absolute;left:1281px;top:578px" width="26" height="18" viewBox="1281 578 26 18" fill="none"><g ><rect x="1283.6" y="580.9" width="19.2" height="12.4" stroke="#323130" stroke-width="1"/><text x="1293.2" y="590.6" text-anchor="middle" font-family="Liberation Sans" font-size="8" fill="#323130" textLength="12" lengthAdjust="spacingAndGlyphs">123</text></g></svg>
<div class="t" style="left:1308.24px;top:584.00px;font-size:17.5px;font-weight:400;-webkit-text-stroke:0.36px #323130;color:#323130;transform:scaleX(0.9622);">Passing Score</div>
<svg style="position:absolute;left:1420.1px;top:585.3px" width="14" height="10" viewBox="1420.1 585.3 14 10" fill="none"><g stroke="#323130" stroke-width="1.2"><path d="M1422.1 587.3 L1426.6999999999998 592.3 L1431.3 587.3"/></g></svg>
<svg style="position:absolute;left:1459.3px;top:578.8px" width="24" height="18" viewBox="1459.3 578.8 24 18" fill="none"><g ><rect x="1461.8" y="581.3" width="19" height="12.5" stroke="#323130" stroke-width="1"/><text x="1471.3" y="590.8" text-anchor="middle" font-family="Liberation Sans" font-size="8.4" fill="#323130" textLength="14" lengthAdjust="spacingAndGlyphs">Abc</text></g></svg>
<div class="t" style="left:1485.97px;top:584.00px;font-size:17.5px;font-weight:400;-webkit-text-stroke:0.36px #323130;color:#323130;transform:scaleX(1.0333);">Name</div>
<div class="t" style="left:1536.90px;top:583.30px;font-size:17.5px;font-weight:400;color:#a4262c;transform:scaleX(0.8857);">*</div>
<svg style="position:absolute;left:1548px;top:580px" width="16" height="20" viewBox="1548 580 16 20" fill="none"><g stroke="#323130" stroke-width="1.1"><path d="M1555.7 597.3 V583.4 M1552.4 586.7 L1555.7 583.4 L1559 586.7"/></g></svg>
<svg style="position:absolute;left:1565.2px;top:585.3px" width="14" height="10" viewBox="1565.2 585.3 14 10" fill="none"><g stroke="#323130" stroke-width="1.2"><path d="M1567.2 587.3 L1571.8 592.3 L1576.4 587.3"/></g></svg>
<div style="position:absolute;left:1637px;top:565px;width:196px;height:53px;box-sizing:border-box;border:1px solid #e1dfdd;border-radius:6px 6px 0 0;background:#fff"></div>
<div class="t" style="left:1663.56px;top:583.90px;font-size:17.5px;font-weight:400;color:#742774;transform:scaleX(1.0411);">+29 more</div>
<svg style="position:absolute;left:1749.2px;top:585.5px" width="18.59999999999991" height="10.100000000000023" viewBox="1749.2 585.5 18.59999999999991 10.100000000000023" fill="none"><g stroke="#742774" stroke-width="1.1"><path d="M1751.2 587.5 L1758.50 593.6 L1765.8 587.5"/></g></svg>
<div style="position:absolute;left:1781px;top:576px;width:1px;height:31px;background:#e1dfdd"></div>
<svg style="position:absolute;left:1794px;top:578px" width="26" height="26" viewBox="1794 578 26 26" fill="none"><g stroke="#742774" stroke-width="1.1" shape-rendering="crispEdges"><path d="M1807.5 580.5 V600.5 M1797.5 590.5 H1817.5"/></g></svg>
<div style="position:absolute;left:773px;top:618px;width:1px;height:280px;background:#e9e7e5"></div>
<div style="position:absolute;left:1085px;top:618px;width:1px;height:280px;background:#e9e7e5"></div>
<div style="position:absolute;left:1265px;top:618px;width:1px;height:280px;background:#e9e7e5"></div>
<div style="position:absolute;left:1445px;top:618px;width:1px;height:280px;background:#e9e7e5"></div>
<div style="position:absolute;left:461px;top:670px;width:1176px;height:1px;background:#e9e7e5"></div>
<div class="t" style="left:476.40px;top:638.00px;font-size:17.5px;font-weight:400;color:#201f1e;transform:scaleX(0.9372);">Aakansha</div>
<div class="t" style="left:787.61px;top:638.00px;font-size:17.5px;font-weight:400;color:#201f1e;transform:scaleX(0.9948);">Panipat</div>
<svg style="position:absolute;left:1099px;top:629px" width="56" height="30" viewBox="1099 629 56 30" fill="none"><g ><rect x="1101.6" y="632.30" width="48.8" height="24.1" rx="12.05" fill="#fff" stroke="#605e5c" stroke-width="1.1"/><circle cx="1113.1" cy="644.35" r="7.6" fill="#605e5c"/></g></svg>
<div class="t" style="left:1160.52px;top:638.00px;font-size:17.5px;font-weight:400;color:#201f1e;transform:scaleX(1.0810);">No</div>
<div class="t" style="left:1412.50px;top:638.00px;font-size:17.5px;font-weight:400;color:#201f1e;transform:scaleX(0.9895);">40</div>
<div class="t" style="left:1461.50px;top:638.00px;font-size:17.5px;font-weight:400;color:#201f1e;transform:scaleX(0.9545);">Akanksha</div>
<div style="position:absolute;left:461px;top:722px;width:1176px;height:1px;background:#e9e7e5"></div>
<div class="t" style="left:476.40px;top:690.45px;font-size:17.5px;font-weight:400;color:#201f1e;transform:scaleX(0.9976);">Anjali</div>
<div class="t" style="left:788.60px;top:690.45px;font-size:17.5px;font-weight:400;color:#201f1e;transform:scaleX(0.9681);">Jaipur</div>
<svg style="position:absolute;left:1099px;top:682px" width="56" height="30" viewBox="1099 682 56 30" fill="none"><g ><rect x="1101" y="684.15" width="50" height="25.3" rx="12.65" fill="#742774"/><circle cx="1138.6" cy="696.80" r="7.7" fill="#fff"/></g></svg>
<div class="t" style="left:1160.69px;top:690.45px;font-size:17.5px;font-weight:400;color:#201f1e;transform:scaleX(0.9074);">Yes</div>
<div class="t" style="left:1461.50px;top:690.45px;font-size:17.5px;font-weight:400;color:#201f1e;transform:scaleX(0.9686);">Ashish</div>
<div style="position:absolute;left:461px;top:775px;width:1176px;height:1px;background:#e9e7e5"></div>
<div class="t" style="left:475.44px;top:742.90px;font-size:17.5px;font-weight:400;color:#201f1e;transform:scaleX(0.9647);">Bharat</div>
<div class="t" style="left:787.58px;top:742.90px;font-size:17.5px;font-weight:400;color:#201f1e;transform:scaleX(1.0155);">Sonipat</div>
<svg style="position:absolute;left:1099px;top:734px" width="56" height="30" viewBox="1099 734 56 30" fill="none"><g ><rect x="1101" y="736.60" width="50" height="25.3" rx="12.65" fill="#742774"/><circle cx="1138.6" cy="749.25" r="7.7" fill="#fff"/></g></svg>
<div class="t" style="left:1160.69px;top:742.90px;font-size:17.5px;font-weight:400;color:#201f1e;transform:scaleX(0.9074);">Yes</div>
<div class="t" style="left:1412.41px;top:742.90px;font-size:17.5px;font-weight:400;color:#201f1e;transform:scaleX(0.9944);">75</div>
<div class="t" style="left:1460.53px;top:742.90px;font-size:17.5px;font-weight:400;color:#201f1e;transform:scaleX(0.9686);">Bharat</div>
<div style="position:absolute;left:461px;top:827px;width:1176px;height:1px;background:#e9e7e5"></div>
<div class="t" style="left:475.45px;top:795.35px;font-size:17.5px;font-weight:400;color:#201f1e;transform:scaleX(0.9500);">Harsha</div>
<div class="t" style="left:787.56px;top:795.35px;font-size:17.5px;font-weight:400;color:#201f1e;transform:scaleX(1.0368);">Delhi</div>
<svg style="position:absolute;left:1099px;top:787px" width="56" height="30" viewBox="1099 787 56 30" fill="none"><g ><rect x="1101.6" y="789.65" width="48.8" height="24.1" rx="12.05" fill="#fff" stroke="#605e5c" stroke-width="1.1"/><circle cx="1113.1" cy="801.70" r="7.6" fill="#605e5c"/></g></svg>
<div class="t" style="left:1160.52px;top:795.35px;font-size:17.5px;font-weight:400;color:#201f1e;transform:scaleX(1.0810);">No</div>
<div class="t" style="left:1412.41px;top:795.35px;font-size:17.5px;font-weight:400;color:#201f1e;transform:scaleX(0.9944);">65</div>
<div class="t" style="left:1460.54px;top:795.35px;font-size:17.5px;font-weight:400;color:#201f1e;transform:scaleX(0.9575);">harsha</div>
<div style="position:absolute;left:461px;top:880px;width:1176px;height:1px;background:#e9e7e5"></div>
<div class="t" style="left:475.46px;top:847.80px;font-size:17.5px;font-weight:400;color:#201f1e;transform:scaleX(0.9409);">Richa</div>
<div class="t" style="left:787.64px;top:847.80px;font-size:17.5px;font-weight:400;color:#201f1e;transform:scaleX(0.9614);">Chapra</div>
<svg style="position:absolute;left:1099px;top:839px" width="56" height="30" viewBox="1099 839 56 30" fill="none"><g ><rect x="1101.6" y="842.10" width="48.8" height="24.1" rx="12.05" fill="#fff" stroke="#605e5c" stroke-width="1.1"/><circle cx="1113.1" cy="854.15" r="7.6" fill="#605e5c"/></g></svg>
<div class="t" style="left:1160.52px;top:847.80px;font-size:17.5px;font-weight:400;color:#201f1e;transform:scaleX(1.0810);">No</div>
<div class="t" style="left:1460.52px;top:847.80px;font-size:17.5px;font-weight:400;color:#201f1e;transform:scaleX(0.9811);">richa</div>
<div style="position:absolute;left:1913px;top:61px;width:7px;height:613px;background:#a6a7ab;border-radius:3.5px"></div>
</body></html>
